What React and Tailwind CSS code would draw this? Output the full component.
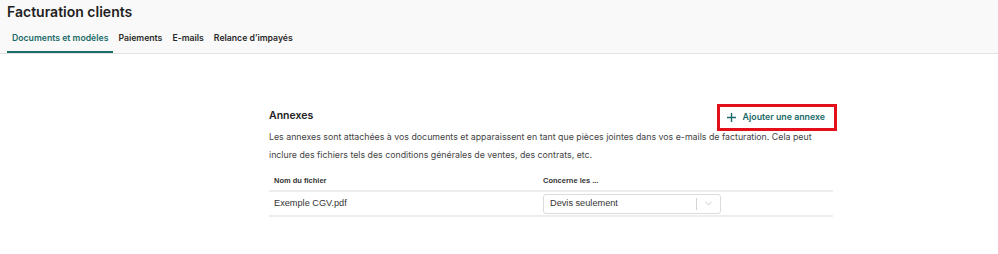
import { ChevronDown } from "lucide-react"

const tabs = ["Documents et modèles", "Paiements", "E-mails", "Relance d’impayés"]

export default function App() {
  return (
    <div className="w-[998px] h-[254px] bg-white text-[#222] font-['Inter',sans-serif] overflow-hidden">
      <div className="bg-[#f9f9f9] border-b border-[#e2e2e2] px-[7px]">
        <h1 className="pt-[2px] text-[14px] leading-[20px] font-semibold text-[#1f1f1f]">Facturation clients</h1>
        <div className="flex mt-[9px]">
          {tabs.map((t, i) => (
            <div
              key={t}
              className={
                i === 0
                  ? "px-[5px] pt-[1px] pb-[6px] text-[8.7px] leading-[13px] font-semibold text-[#1b6b68] border-b-[2px] border-[#1b6b68]"
                  : "px-[5px] pt-[1px] pb-[6px] text-[8.7px] leading-[13px] font-semibold text-[#2a2a2a] border-b-[2px] border-transparent"
              }
            >
              {t}
            </div>
          ))}
        </div>
      </div>

      <div className="w-[564px] ml-[269px] mt-[49px]">
        <div className="flex items-center justify-between h-[28px]">
          <h2 className="text-[10.5px] font-semibold text-[#222] mt-[-2px]">Annexes</h2>
          <button className="flex items-center h-[27px] pl-[7px] pr-[9px] mr-[-4px] border-[3px] border-[#e3101b] text-[8.8px] font-semibold text-[#1b6b68]">
            <svg width="9" height="9" viewBox="0 0 9 9" className="mr-[7px]">
              <path d="M4.5 0v9M0 4.5h9" stroke="currentColor" strokeWidth="1.4" />
            </svg>
            Ajouter une annexe
          </button>
        </div>
        <p className="mt-[-3px] text-[8.8px] leading-[18px] text-[#444]">
          Les annexes sont attachées à vos documents et apparaissent en tant que pièces jointes dans vos e-mails de facturation. Cela peut
          inclure des fichiers tels des conditions générales de ventes, des contrats, etc.
        </p>

        <div className="mt-[8px] font-['Liberation_Sans',Arial,sans-serif]">
          <div className="grid grid-cols-[274px_1fr] h-[20px] items-center border-b-[2px] border-[#ededed] text-[7.5px] font-bold text-[#333]">
            <div className="pl-[5px]">Nom du fichier</div>
            <div>Concerne les ...</div>
          </div>
          <div className="grid grid-cols-[274px_1fr] h-[25px] items-center border-b-[2px] border-[#ededed] text-[9.2px] text-[#333]">
            <div className="pl-[5px]">Exemple CGV.pdf</div>
            <div className="flex items-center w-[178px] h-[20px] border border-[#dcdcdc] rounded-[3px]">
              <span className="flex-1 pl-[6px]">Devis seulement</span>
              <span className="w-px h-[12px] bg-[#d4d4d4]" />
              <span className="w-[23px] flex justify-center text-[#b0b0b0]">
                <ChevronDown size={11} strokeWidth={1.5} />
              </span>
            </div>
          </div>
        </div>
      </div>
    </div>
  )
}
